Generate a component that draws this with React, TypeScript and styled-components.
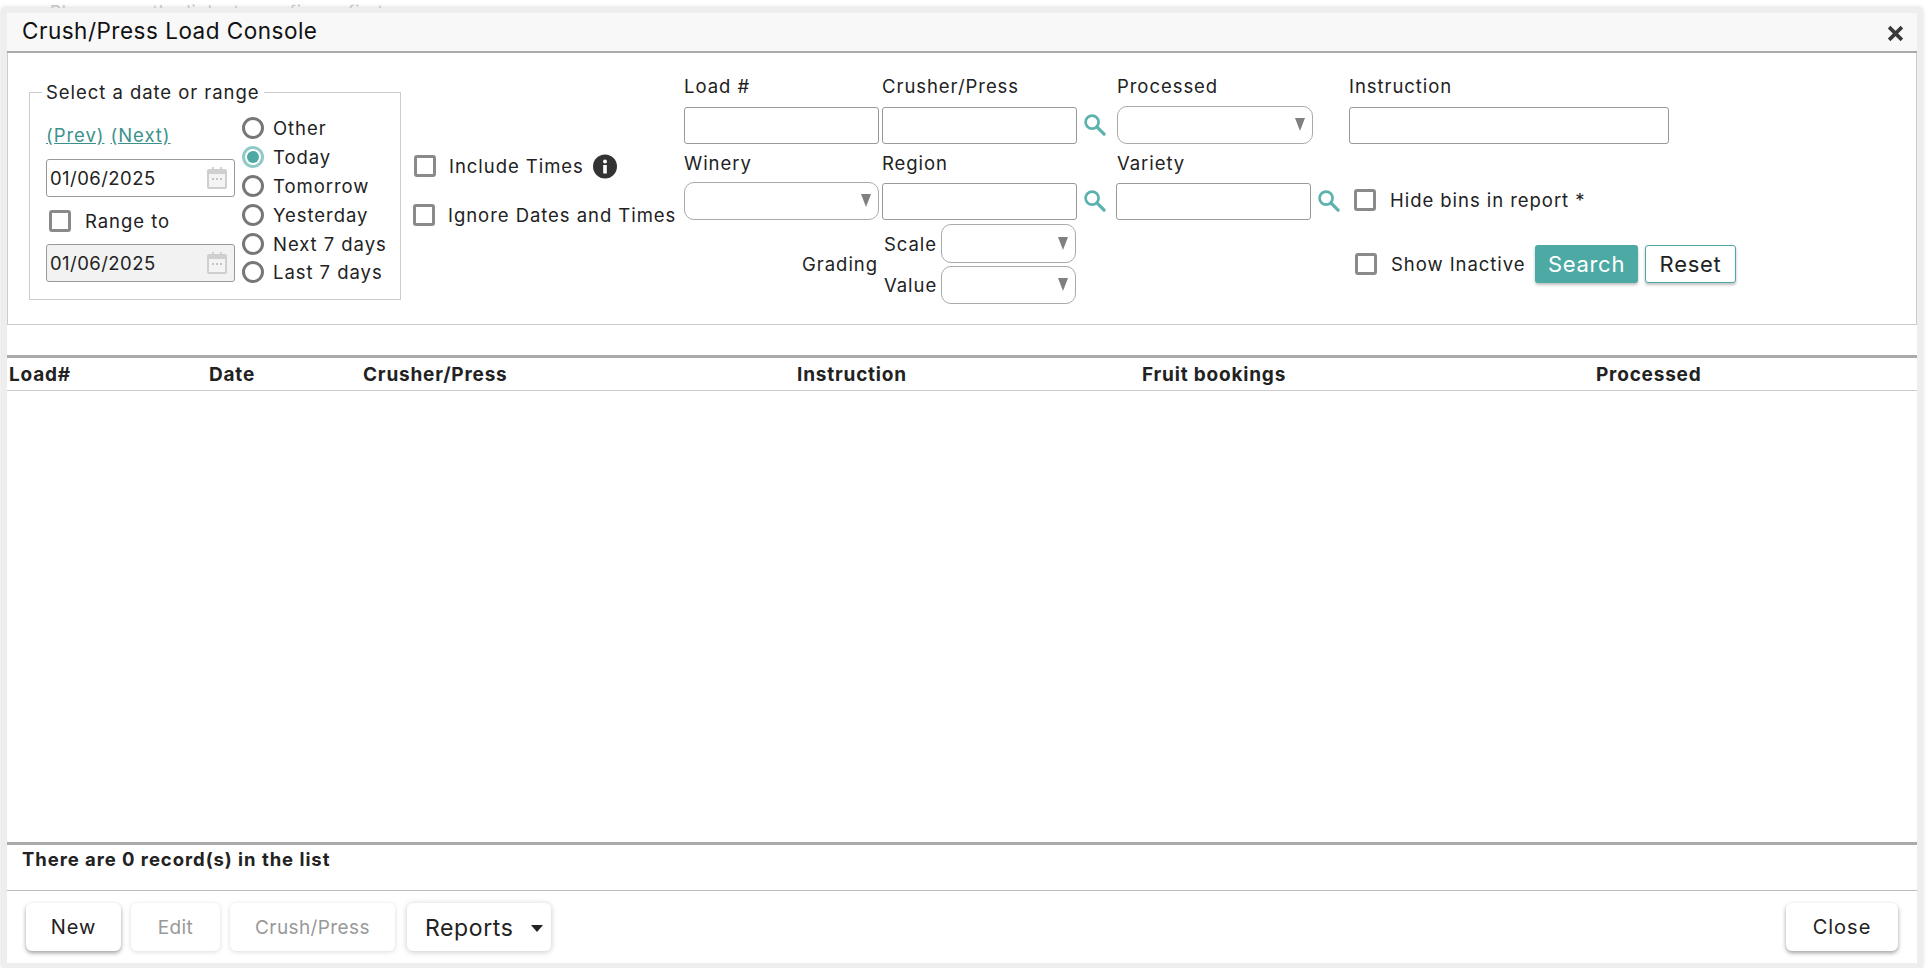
import * as React from 'react';
import styled, { createGlobalStyle } from 'styled-components';

const TEAL = '#4da9a4';

const GlobalStyle = createGlobalStyle`
  html, body {
    margin: 0;
    padding: 0;
    height: 968px;
    overflow: hidden;
    background: #fff;
    color: #222;
    font-family: Inter, "Liberation Sans", sans-serif;
    font-size: 18.5px;
    letter-spacing: 0.95px;
  }
  * { box-sizing: border-box; }
`;

const BehindText = styled.div`
  height: 8px;
  overflow: hidden;
  padding-left: 50px;
  font-size: 17px;
  line-height: 24px;
  color: #c4c4c4;
`;

const Frame = styled.div`
  height: 960px;
  margin: 0 6px 0 2px;
  padding: 5px;
  background: #eee;
  box-shadow: 0 0 5px rgba(0, 0, 0, 0.18);
`;

const Modal = styled.div`
  height: 100%;
  display: flex;
  flex-direction: column;
  background: #fff;
`;

const TitleBar = styled.div`
  height: 40px;
  flex: none;
  display: flex;
  align-items: center;
  justify-content: space-between;
  padding: 0 13px 4px 15px;
  background: #f8f8f8;
  border-bottom: 2px solid #aaa;
`;

const Title = styled.div`
  font-size: 22.5px;
  color: #111;
  letter-spacing: 0.5px;
`;

const CloseIcon = styled.svg`
  margin-top: 6px;
`;

const FilterPanel = styled.div`
  height: 272px;
  flex: none;
  display: flex;
  align-items: flex-start;
  padding: 21px 0 0 21px;
  border: 1px solid #ccc;
  border-top: 0;
`;

const DateFieldset = styled.fieldset`
  width: 372px;
  height: 219px;
  flex: none;
  margin: 7px 0 0;
  padding: 11px 0 0 16px;
  border: 1px solid #ccc;
`;

const Legend = styled.legend`
  margin-left: -4px;
  padding: 0 4px;
  line-height: 22px;
`;

const DateInner = styled.div`
  display: flex;
  gap: 7px;
`;

const DateColumn = styled.div`
  width: 189px;
  padding-top: 8px;
`;

const LinkRow = styled.div`
  height: 26px;
  margin-bottom: 11px;
  display: flex;
  align-items: center;
  gap: 6px;
`;

const NavLink = styled.a`
  color: #3d918c;
  text-decoration: underline;
`;

const DateBox = styled.div<{ $disabled?: boolean }>`
  height: 38px;
  display: flex;
  align-items: center;
  padding: 0 6px 0 3px;
  border: 1px solid #999;
  border-radius: 3px;
  background: ${p => (p.$disabled ? '#f2f2f2' : '#fff')};
`;

const DateValue = styled.input`
  flex: 1;
  min-width: 0;
  border: 0;
  outline: 0;
  padding: 0;
  background: transparent;
  color: #222;
  font: inherit;
  letter-spacing: 0.45px;
`;

const RangeRow = styled.label`
  height: 47px;
  display: flex;
  align-items: center;
  gap: 14px;
  padding-left: 3px;
`;

const RadioColumn = styled.div`
  display: flex;
  flex-direction: column;
`;

const RadioRow = styled.label`
  height: 28.8px;
  display: flex;
  align-items: center;
  gap: 9px;
  white-space: nowrap;
`;

const RadioMark = styled.span<{ $checked?: boolean }>`
  width: 22px;
  height: 22px;
  flex: none;
  display: flex;
  align-items: center;
  justify-content: center;
  border-radius: 50%;
  border: 3px solid ${p => (p.$checked ? '#8fcac6' : '#777')};
  &::after {
    content: '';
    width: 12px;
    height: 12px;
    border-radius: 50%;
    background: ${p => (p.$checked ? TEAL : 'transparent')};
  }
`;

const CheckMark = styled.span`
  width: 22px;
  height: 22px;
  flex: none;
  background: #fff;
  border: 3px solid #8a8a8a;
  border-radius: 3px;
`;

const OptionsColumn = styled.div`
  width: 271px;
  flex: none;
  margin: 79px 0 0 12px;
  display: flex;
  flex-direction: column;
  gap: 23px;
`;

const CheckRow = styled.label<{ $inset?: number; $gap?: number; $width?: number }>`
  min-height: 26px;
  width: ${p => (p.$width ? `${p.$width}px` : 'auto')};
  flex: none;
  display: flex;
  align-items: center;
  gap: ${p => p.$gap ?? 13}px;
  padding-left: ${p => p.$inset ?? 0}px;
  white-space: nowrap;
`;

const InfoBadge = styled.span`
  width: 24px;
  height: 25px;
  margin-left: -4px;
  flex: none;
`;

const FieldGrid = styled.div`
  display: grid;
  grid-template-columns: 198px 235px 232px auto;
  grid-template-rows: 32px 45px 31px 42px auto;
`;

const FieldLabel = styled.div`
  line-height: 24px;
`;

const GradingLabel = styled.div`
  display: flex;
  align-items: center;
  justify-content: flex-end;
  padding-right: 4px;
`;

const InputCell = styled.div`
  display: flex;
  align-items: flex-start;
`;

const TextBox = styled.input<{ $width: number; $shift?: number }>`
  width: ${p => p.$width}px;
  height: 37px;
  margin: 1px 0 0 ${p => p.$shift ?? 0}px;
  padding: 0 4px;
  border: 1px solid #999;
  border-radius: 3px;
  outline: 0;
  font: inherit;
`;

const SearchGlyph = styled.svg`
  width: 23px;
  height: 23px;
  margin: 7px 0 0 6px;
  flex: none;
`;

const SelectBox = styled.div<{ $width: number; $height?: number }>`
  position: relative;
  width: ${p => p.$width}px;
  height: ${p => p.$height ?? 38}px;
  border: 1px solid #aaa;
  border-radius: 10px;
  background: #fff;
  &::after {
    content: '';
    position: absolute;
    right: 7px;
    top: 50%;
    margin-top: -7px;
    border-left: 5.5px solid transparent;
    border-right: 5.5px solid transparent;
    border-top: 13px solid #808080;
  }
`;

const GradingGroup = styled.div`
  display: flex;
  flex-direction: column;
  gap: 3px;
`;

const GradingRow = styled.div`
  display: flex;
  align-items: center;
  padding-left: 2px;
`;

const GradingName = styled.span`
  width: 57px;
  flex: none;
`;

const HideBinsCell = styled.div`
  height: 35px;
  display: flex;
  align-items: center;
`;

const SearchRow = styled.div`
  align-self: start;
  margin-top: 21px;
  display: flex;
  align-items: center;
  white-space: nowrap;
`;

const SearchButton = styled.button`
  width: 103px;
  height: 38px;
  border: 0;
  border-radius: 3px;
  background: ${TEAL};
  color: #fff;
  font: inherit;
  font-size: 22px;
  letter-spacing: 0.7px;
  box-shadow: 0 2px 3px rgba(0, 0, 0, 0.25);
`;

const ResetButton = styled.button`
  width: 91px;
  height: 38px;
  margin-left: 7px;
  border: 1px solid ${TEAL};
  border-radius: 3px;
  background: #fff;
  color: #222;
  font: inherit;
  font-size: 22px;
  letter-spacing: 0.7px;
  box-shadow: 0 2px 3px rgba(0, 0, 0, 0.25);
`;

const TableHead = styled.div`
  height: 36px;
  flex: none;
  margin-top: 30px;
  display: grid;
  grid-template-columns: 200px 154px 434px 345px 454px 1fr;
  align-items: center;
  padding-left: 2px;
  border-top: 3px solid #aaa;
  border-bottom: 1px solid #ccc;
  font-weight: 700;
  font-size: 19px;
  letter-spacing: 0.8px;
`;

const TableBody = styled.div`
  flex: 1;
`;

const RecordCount = styled.div`
  height: 49px;
  flex: none;
  padding: 2px 0 0 15px;
  border-top: 3px solid #aaa;
  border-bottom: 1px solid #bbb;
  font-weight: 700;
  line-height: 24px;
`;

const ActionBar = styled.div`
  height: 72px;
  flex: none;
  display: flex;
  align-items: flex-start;
  padding: 12px 19px 0;
`;

const ActionButton = styled.button<{ $width: number; $gapLeft?: number; $disabled?: boolean }>`
  width: ${p => p.$width}px;
  height: 48px;
  margin-left: ${p => p.$gapLeft ?? 0}px;
  border: 0;
  border-radius: 6px;
  background: #fff;
  color: ${p => (p.$disabled ? '#999' : '#222')};
  font: inherit;
  font-size: ${p => (p.$disabled ? 19 : 20)}px;
  letter-spacing: ${p => (p.$disabled ? 0.4 : 1)}px;
  box-shadow: ${p =>
    p.$disabled ? '0 1px 5px rgba(0, 0, 0, 0.14)' : '0 2px 4px rgba(0, 0, 0, 0.38)'};
`;

const ReportsButton = styled.button`
  width: 144px;
  height: 48px;
  margin-left: 12px;
  display: flex;
  align-items: center;
  justify-content: space-between;
  padding: 2px 8px 0 18px;
  border: 0;
  border-radius: 6px;
  background: #fff;
  color: #222;
  font: inherit;
  font-size: 23px;
  letter-spacing: 0.6px;
  box-shadow: 0 1px 6px rgba(0, 0, 0, 0.22);
  &::after {
    content: '';
    border-left: 6px solid transparent;
    border-right: 6px solid transparent;
    border-top: 7px solid #222;
  }
`;

const Spacer = styled.div`
  flex: 1;
`;

const SearchIcon = () => (
  <SearchGlyph viewBox="0 0 24 24" fill="none" stroke="#5cb3ae" strokeWidth="2.8">
    <circle cx="9.5" cy="9.5" r="6.8" />
    <path d="M14.5 14.5 22 22" strokeLinecap="round" strokeWidth="3.4" />
  </SearchGlyph>
);

const CalendarIcon = () => (
  <svg width="22" height="24" viewBox="0 0 22 24" style={{ flex: 'none' }}>
    <path
      d="M3 3h3V1h2v2h6V1h2v2h3a2 2 0 0 1 2 2v16a2 2 0 0 1-2 2H3a2 2 0 0 1-2-2V5a2 2 0 0 1 2-2z"
      fill="#cfcfcf"
    />
    <rect x="3" y="8" width="16" height="13" fill="#f4f4f4" />
    <path d="M6 12h2v2H6zM10 12h2v2h-2zM14 12h2v2h-2z" fill="#c4c4c4" />
  </svg>
);

const Radio: React.FC<{ label: string; checked?: boolean }> = ({ label, checked }) => (
  <RadioRow>
    <RadioMark $checked={checked} />
    {label}
  </RadioRow>
);

const App: React.FC = () => (
  <>
    <GlobalStyle />
    <BehindText>Please use the links to configure first</BehindText>
    <Frame>
      <Modal>
        <TitleBar>
          <Title>Crush/Press Load Console</Title>
          <CloseIcon width="17" height="17" viewBox="0 0 16 16" stroke="#3a3a3a" strokeWidth="3.4">
            <path d="M2 2l12 12M14 2 2 14" />
          </CloseIcon>
        </TitleBar>

        <FilterPanel>
          <DateFieldset>
            <Legend>Select a date or range</Legend>
            <DateInner>
              <DateColumn>
                <LinkRow>
                  <NavLink>(Prev)</NavLink>
                  <NavLink>(Next)</NavLink>
                </LinkRow>
                <DateBox>
                  <DateValue defaultValue="01/06/2025" />
                  <CalendarIcon />
                </DateBox>
                <RangeRow>
                  <CheckMark />
                  Range to
                </RangeRow>
                <DateBox $disabled>
                  <DateValue defaultValue="01/06/2025" />
                  <CalendarIcon />
                </DateBox>
              </DateColumn>
              <RadioColumn>
                <Radio label="Other" />
                <Radio label="Today" checked />
                <Radio label="Tomorrow" />
                <Radio label="Yesterday" />
                <Radio label="Next 7 days" />
                <Radio label="Last 7 days" />
              </RadioColumn>
            </DateInner>
          </DateFieldset>

          <OptionsColumn>
            <CheckRow $inset={1}>
              <CheckMark />
              Include Times
              <InfoBadge>
                <svg width="24" height="25" viewBox="0 0 24 25">
                  <circle cx="12" cy="12.5" r="12" fill="#333" />
                  <circle cx="12" cy="7.5" r="2" fill="#fff" />
                  <rect x="10.2" y="11" width="3.6" height="8.5" fill="#fff" />
                </svg>
              </InfoBadge>
            </CheckRow>
            <CheckRow>
              <CheckMark />
              Ignore Dates and Times
            </CheckRow>
          </OptionsColumn>

          <FieldGrid>
            <FieldLabel>Load #</FieldLabel>
            <FieldLabel>Crusher/Press</FieldLabel>
            <FieldLabel>Processed</FieldLabel>
            <FieldLabel>Instruction</FieldLabel>

            <InputCell>
              <TextBox $width={195} />
            </InputCell>
            <InputCell>
              <TextBox $width={195} />
              <SearchIcon />
            </InputCell>
            <InputCell>
              <SelectBox $width={196} />
            </InputCell>
            <InputCell>
              <TextBox $width={320} />
            </InputCell>

            <FieldLabel>Winery</FieldLabel>
            <FieldLabel>Region</FieldLabel>
            <FieldLabel>Variety</FieldLabel>
            <div />

            <InputCell>
              <SelectBox $width={195} />
            </InputCell>
            <InputCell>
              <TextBox $width={195} />
              <SearchIcon />
            </InputCell>
            <InputCell>
              <TextBox $width={195} $shift={-1} />
              <SearchIcon />
            </InputCell>
            <HideBinsCell>
              <CheckRow $inset={5} $gap={14}>
                <CheckMark />
                Hide bins in report *
              </CheckRow>
            </HideBinsCell>

            <GradingLabel>Grading</GradingLabel>
            <GradingGroup>
              <GradingRow>
                <GradingName>Scale</GradingName>
                <SelectBox $width={135} $height={39} />
              </GradingRow>
              <GradingRow>
                <GradingName>Value</GradingName>
                <SelectBox $width={135} />
              </GradingRow>
            </GradingGroup>
            <div />
            <SearchRow>
              <CheckRow $inset={6} $gap={14} $width={186}>
                <CheckMark />
                Show Inactive
              </CheckRow>
              <SearchButton>Search</SearchButton>
              <ResetButton>Reset</ResetButton>
            </SearchRow>
          </FieldGrid>
        </FilterPanel>

        <TableHead>
          <span>Load#</span>
          <span>Date</span>
          <span>Crusher/Press</span>
          <span>Instruction</span>
          <span>Fruit bookings</span>
          <span>Processed</span>
        </TableHead>
        <TableBody />

        <RecordCount>There are 0 record(s) in the list</RecordCount>

        <ActionBar>
          <ActionButton $width={95}>New</ActionButton>
          <ActionButton $width={89} $gapLeft={10} $disabled>
            Edit
          </ActionButton>
          <ActionButton $width={165} $gapLeft={10} $disabled>
            Crush/Press
          </ActionButton>
          <ReportsButton>Reports</ReportsButton>
          <Spacer />
          <ActionButton $width={112}>Close</ActionButton>
        </ActionBar>
      </Modal>
    </Frame>
  </>
);

export default App;
